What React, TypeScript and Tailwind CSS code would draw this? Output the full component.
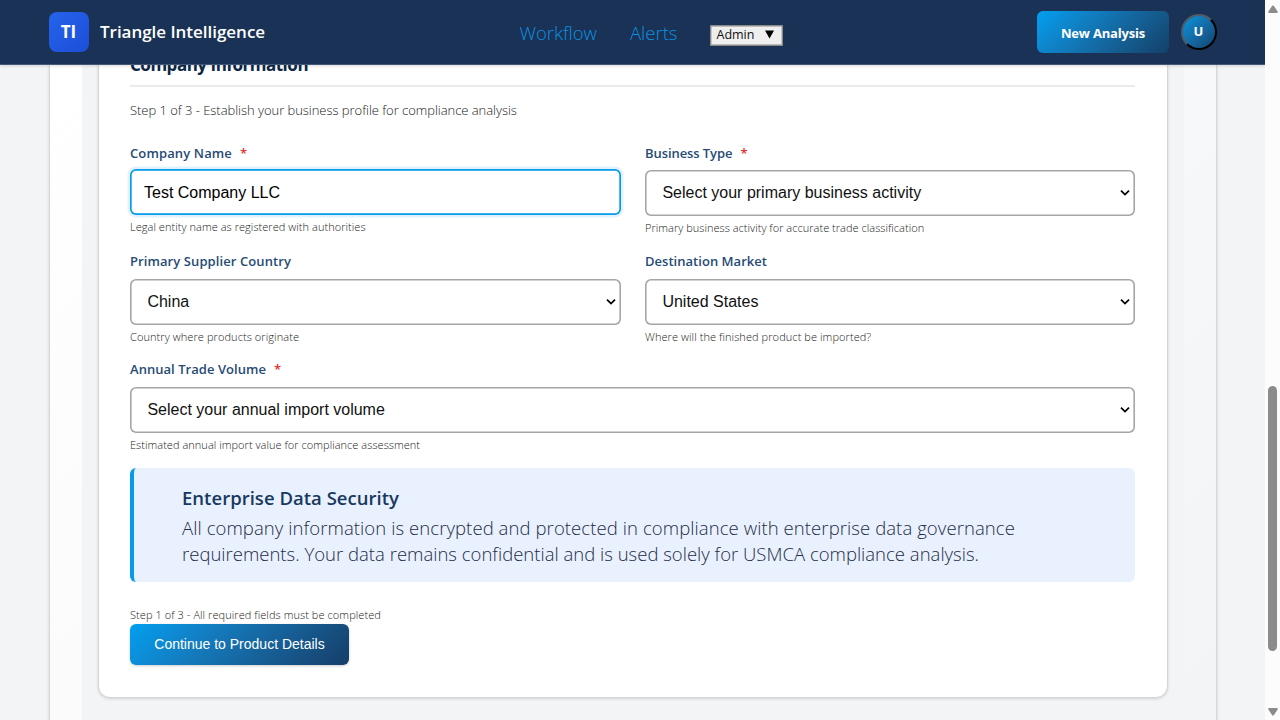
import type { ReactNode } from "react";

function Chevron() {
  return (
    <svg className="mt-px" width="10" height="8" viewBox="0 0 10 8" fill="none" stroke="#000" strokeWidth="1.7">
      <path d="M1 1.6 5 5.6 9 1.6" />
    </svg>
  );
}

function Label({ text, spacing, required }: { text: string; spacing: string; required?: boolean }) {
  return (
    <div className="flex h-5 items-center gap-2 text-[13px] leading-5 font-semibold text-[#264b75]">
      <span className={spacing}>{text}</span>
      {required && <span className="font-semibold text-[#e03434]">*</span>}
    </div>
  );
}

function Select({ value }: { value: string }) {
  return (
    <div className="flex h-[46px] items-center justify-between rounded-md bg-white pr-[5px] pl-[17.4px] font-['Liberation_Sans',sans-serif] text-base text-[#111] shadow-[inset_0_0_0_1.6px_#a6a6a6]">
      <span className="mt-px">{value}</span>
      <Chevron />
    </div>
  );
}

function Help({ children, spacing }: { children: ReactNode; spacing: string }) {
  return <div className={`h-4 text-[11px] leading-4 font-light whitespace-nowrap text-[#222] ${spacing}`}>{children}</div>;
}

function Header() {
  return (
    <header className="relative z-10 flex h-[65px] shrink-0 items-center border-b border-[#44597a] bg-[#1a3256] pb-px pl-[49px] shadow-[0_1px_3px_rgba(0,0,0,0.15)]">
      <div className="flex h-10 w-10 items-center justify-center rounded-lg bg-linear-135 from-[#2563eb] to-[#1d4ed8] pt-px pr-px text-[17px] font-bold text-white">
        TI
      </div>
      <div className="ml-[11px] w-[419.5px] text-[17px] font-semibold tracking-[-0.03px] text-white">Triangle Intelligence</div>
      <nav className="flex w-[517.5px] items-center text-[18.5px] font-light text-[#0c92e2]">
        <span className="mt-[3px] w-[110.5px]">Workflow</span>
        <span className="mt-[3px] w-[79.5px]">Alerts</span>
        <button className="mt-[7px] flex h-[21px] w-[73px] items-center justify-between rounded-[2px] bg-[#efefef] pr-[9px] pl-[7px] text-[12.5px] leading-4 font-normal text-[#111] shadow-[inset_0_0_0_1.4px_#8a8a8a]">
          <span className="-mt-px">Admin</span>
          <svg className="-mt-px" width="9" height="9" viewBox="0 0 9 9">
            <path d="M0 .5h9L4.500 8.500z" />
          </svg>
        </button>
      </nav>
      <button className="h-[42px] w-[132px] rounded-md bg-linear-135 from-[#009ff0] to-[#134169] pt-[4px] text-[13px] font-bold tracking-[-0.2px] text-white">
        New Analysis
      </button>
      <button className="ml-3 flex h-9 w-9 items-center justify-center rounded-full border-2 border-t-[#4f5b66] border-r-black border-b-black border-l-[#4f5b66] bg-linear-135 from-[#0395e0] to-[#14446f] pr-px text-[13px] font-bold text-white">
        U
      </button>
    </header>
  );
}

function CompanyForm() {
  return (
    <section className="h-[665px] w-[1070px] rounded-xl border border-[#d3d5d8] bg-white pr-8 pl-[31px] shadow-[0_1px_3px_rgba(0,0,0,0.14)]">
      <h2 className="flex h-[53px] items-center border-b-2 border-[#ebebeb] pt-[11px] text-[17px] font-bold tracking-[-0.48px] text-[#0c2747]">
        Company Information
      </h2>
      <p className="mt-[13px] h-5 text-[13px] leading-5 font-light tracking-[-0.04px] text-[#222]">
        Step 1 of 3 - Establish your business profile for compliance analysis
      </p>

      <div className="mt-[23px] grid grid-cols-[491px_490px] gap-x-6">
        <div className="h-[108px]">
          <Label text="Company Name" spacing="tracking-[0.13px]" required />
          <div className="mt-[6.4px] flex h-[45.6px] items-center rounded-md bg-white pl-3.5 font-['Liberation_Sans',sans-serif] text-base text-black shadow-[inset_0_0_0_1.7px_#049bea,0_0_0_2.5px_rgba(4,155,234,0.12)]">
            <span className="mt-[2px]">Test Company LLC</span>
          </div>
          <div className="mt-1">
            <Help spacing="tracking-[0.05px]">Legal entity name as registered with authorities</Help>
          </div>
        </div>
        <div className="h-[108px]">
          <Label text="Business Type" spacing="tracking-[-0.08px]" required />
          <div className="mt-[6.7px]">
            <Select value="Select your primary business activity" />
          </div>
          <div className="mt-[4.3px]">
            <Help spacing="tracking-[0.03px]">Primary business activity for accurate trade classification</Help>
          </div>
        </div>
        <div className="h-[108px]">
          <Label text="Primary Supplier Country" spacing="tracking-[0.09px]" />
          <div className="mt-[7.5px]">
            <Select value="China" />
          </div>
          <div className="mt-[4.5px]">
            <Help spacing="tracking-[0.08px]">Country where products originate</Help>
          </div>
        </div>
        <div className="h-[108px]">
          <Label text="Destination Market" spacing="tracking-[0.03px]" />
          <div className="mt-[7.5px]">
            <Select value="United States" />
          </div>
          <div className="mt-[4.5px]">
            <Help spacing="tracking-[0.08px]">Where will the finished product be imported?</Help>
          </div>
        </div>
      </div>
      <div className="h-[109px]">
        <Label text="Annual Trade Volume" spacing="tracking-[0.04px]" required />
        <div className="mt-[7.5px]">
          <Select value="Select your annual import volume" />
        </div>
        <div className="mt-[4.5px]">
          <Help spacing="tracking-[0.04px]">Estimated annual import value for compliance assessment</Help>
        </div>
      </div>

      <div className="h-[114px] rounded-md border-l-4 border-[#049bea] bg-[#eaf1fe] pt-[17px] pl-12">
        <h3 className="h-[30px] text-[18.5px] leading-[26px] font-semibold tracking-[0.02px] text-[#17395f]">Enterprise Data Security</h3>
        <p className="text-[18.5px] leading-[26px] font-light whitespace-nowrap text-[#1d2c48]">
          <span className="block tracking-[0.086px]">
            All company information is encrypted and protected in compliance with enterprise data governance
          </span>
          <span className="block tracking-[0.01px]">
            requirements. Your data remains confidential and is used solely for USMCA compliance analysis.
          </span>
        </p>
      </div>

      <div className="mt-[25px]">
        <Help spacing="tracking-[0.07px]">Step 1 of 3 - All required fields must be completed</Help>
      </div>
      <button className="mt-[1px] block h-[41px] w-[219px] rounded-md bg-linear-135 from-[#009ff0] to-[#153e68] pb-[2px] font-['Liberation_Sans',sans-serif] text-sm text-white shadow-[0_1px_3px_rgba(0,0,0,0.2)]">
        Continue to Product Details
      </button>
    </section>
  );
}

function Scrollbar() {
  return (
    <div className="flex h-full w-[15px] flex-col items-center bg-[#fcfcfc]">
      <svg className="mt-[5px]" width="10" height="8" viewBox="0 0 10 8" fill="#8b8b8b">
        <path d="M4.200.8Q5 0 5.800.8L9.600 6.500Q10 8 9 8H1Q0 8 .4 6.500z" />
      </svg>
      <div className="mt-[372.500px] h-[265px] w-[9px] rounded-full bg-[#8b8b8b]" />
      <svg className="mt-[57.500px]" width="10" height="8" viewBox="0 0 10 8" fill="#8b8b8b">
        <path d="M4.200 7.200Q5 8 5.800 7.200L9.600 1.500Q10 0 9 0H1Q0 0 .4 1.500z" />
      </svg>
    </div>
  );
}

export default function App() {
  return (
    <div className="flex h-[720px] w-[1280px] overflow-hidden bg-[#f3f4f6] font-['Open_Sans','Noto_Sans',sans-serif]">
      <div className="flex h-full w-[1265px] flex-col overflow-hidden">
        <Header />
        <div className="ml-[49px] h-[655px] w-[1168px] border-x border-[#d5d7da] bg-linear-135 from-white to-[#f3f4f6] px-8 shadow-[0_1px_3px_rgba(0,0,0,0.14)]">
          <div className="flex h-full flex-col bg-[#f3f4f6] px-4">
            <div className="-mt-[32px]">
              <CompanyForm />
            </div>
          </div>
        </div>
      </div>
      <Scrollbar />
    </div>
  );
}
